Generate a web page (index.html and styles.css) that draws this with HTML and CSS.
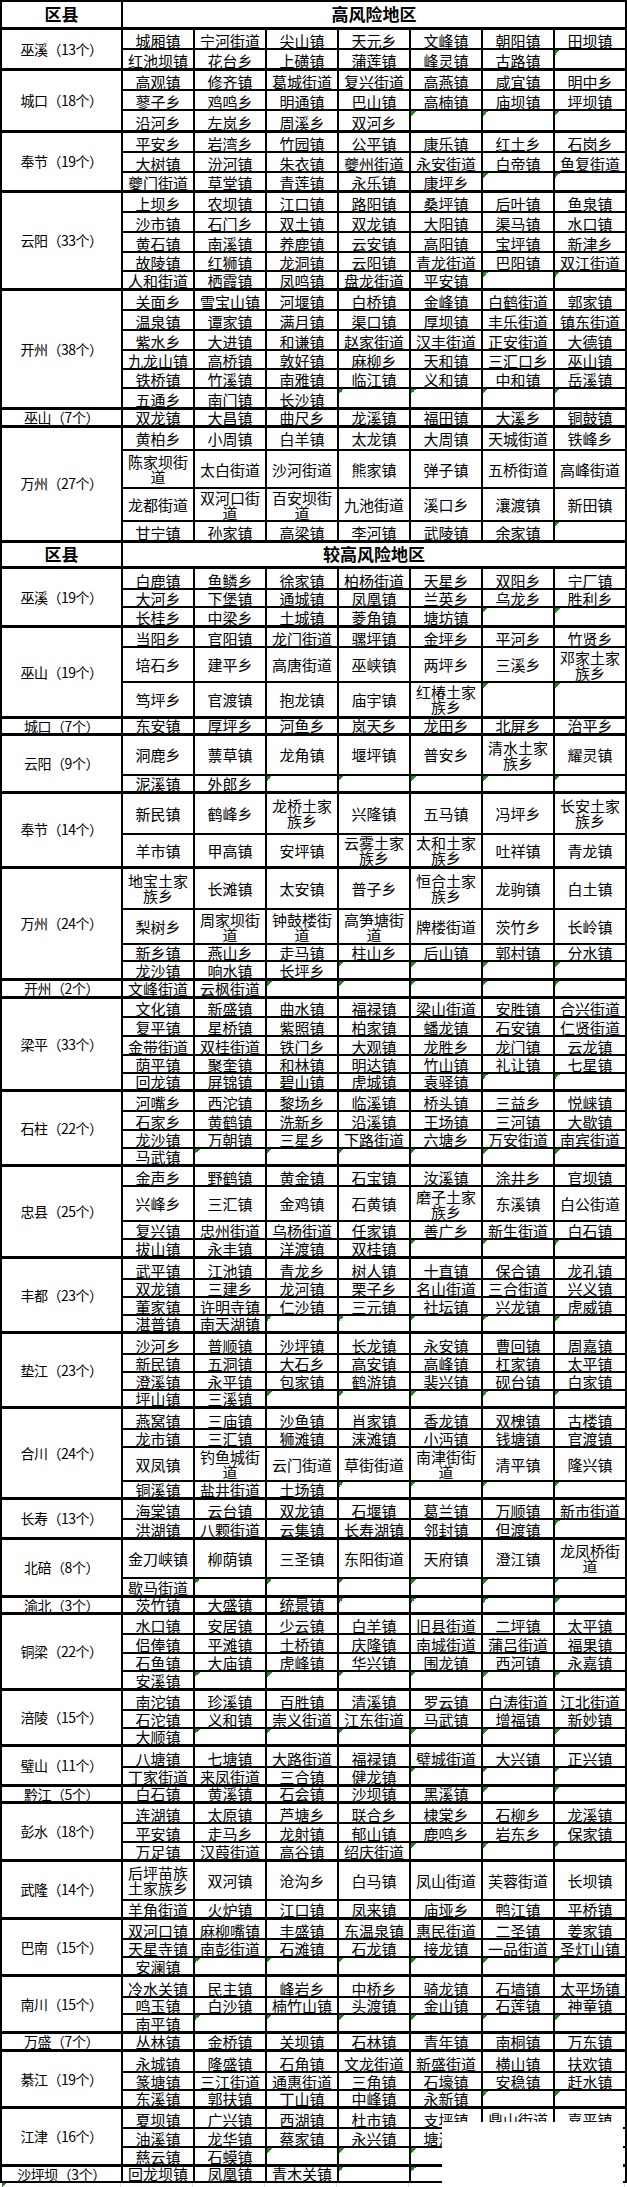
FILE: index.html
```html
<!DOCTYPE html>
<html lang="zh-CN">
<head>
<meta charset="utf-8">
<title>重庆 风险地区</title>
<link rel="stylesheet" href="styles.css">
</head>
<body>
<table class="sheet">
<colgroup><col class="c0"><col class="cd"><col class="cd"><col class="cd"><col class="cd"><col class="cd"><col class="cd"><col class="cd"></colgroup>
<thead>
<tr class="r27"><th>区县</th><th colspan="7">高风险地区</th></tr>
</thead>
<tbody class="sec">
<tr class="r21"><td class="lbl" rowspan="2">巫溪（13个）</td><td>城厢镇</td><td>宁河街道</td><td>尖山镇</td><td>天元乡</td><td>文峰镇</td><td>朝阳镇</td><td>田坝镇</td></tr>
<tr class="r20"><td>红池坝镇</td><td>花台乡</td><td>上磺镇</td><td>蒲莲镇</td><td>峰灵镇</td><td>古路镇</td><td class="e"></td></tr>
</tbody>
<tbody class="sec">
<tr class="r21"><td class="lbl" rowspan="3">城口（18个）</td><td>高观镇</td><td>修齐镇</td><td>葛城街道</td><td>复兴街道</td><td>高燕镇</td><td>咸宜镇</td><td>明中乡</td></tr>
<tr class="r20"><td>蓼子乡</td><td>鸡鸣乡</td><td>明通镇</td><td>巴山镇</td><td>高楠镇</td><td>庙坝镇</td><td>坪坝镇</td></tr>
<tr class="r21"><td>沿河乡</td><td>左岚乡</td><td>周溪乡</td><td>双河乡</td><td class="e"></td><td class="e"></td><td class="e"></td></tr>
</tbody>
<tbody class="sec">
<tr class="r21"><td class="lbl" rowspan="3">奉节（19个）</td><td>平安乡</td><td>岩湾乡</td><td>竹园镇</td><td>公平镇</td><td>康乐镇</td><td>红土乡</td><td>石岗乡</td></tr>
<tr class="r20"><td>大树镇</td><td>汾河镇</td><td>朱衣镇</td><td>夔州街道</td><td>永安街道</td><td>白帝镇</td><td>鱼复街道</td></tr>
<tr class="r19"><td>夔门街道</td><td>草堂镇</td><td>青莲镇</td><td>永乐镇</td><td>康坪乡</td><td class="e"></td><td class="e"></td></tr>
</tbody>
<tbody class="sec">
<tr class="r21"><td class="lbl" rowspan="5">云阳（33个）</td><td>上坝乡</td><td>农坝镇</td><td>江口镇</td><td>路阳镇</td><td>桑坪镇</td><td>后叶镇</td><td>鱼泉镇</td></tr>
<tr class="r20"><td>沙市镇</td><td>石门乡</td><td>双土镇</td><td>双龙镇</td><td>大阳镇</td><td>渠马镇</td><td>水口镇</td></tr>
<tr class="r20"><td>黄石镇</td><td>南溪镇</td><td>养鹿镇</td><td>云安镇</td><td>高阳镇</td><td>宝坪镇</td><td>新津乡</td></tr>
<tr class="r19"><td>故陵镇</td><td>红狮镇</td><td>龙洞镇</td><td>云阳镇</td><td>青龙街道</td><td>巴阳镇</td><td>双江街道</td></tr>
<tr class="r18"><td>人和街道</td><td>栖霞镇</td><td>凤鸣镇</td><td>盘龙街道</td><td>平安镇</td><td class="e"></td><td class="e"></td></tr>
</tbody>
<tbody class="sec">
<tr class="r21"><td class="lbl" rowspan="6">开州（38个）</td><td>关面乡</td><td>雪宝山镇</td><td>河堰镇</td><td>白桥镇</td><td>金峰镇</td><td>白鹤街道</td><td>郭家镇</td></tr>
<tr class="r20"><td>温泉镇</td><td>谭家镇</td><td>满月镇</td><td>渠口镇</td><td>厚坝镇</td><td>丰乐街道</td><td>镇东街道</td></tr>
<tr class="r20"><td>紫水乡</td><td>大进镇</td><td>和谦镇</td><td>赵家街道</td><td>汉丰街道</td><td>正安街道</td><td>大德镇</td></tr>
<tr class="r19"><td>九龙山镇</td><td>高桥镇</td><td>敦好镇</td><td>麻柳乡</td><td>天和镇</td><td>三汇口乡</td><td>巫山镇</td></tr>
<tr class="r19"><td>铁桥镇</td><td>竹溪镇</td><td>南雅镇</td><td>临江镇</td><td>义和镇</td><td>中和镇</td><td>岳溪镇</td></tr>
<tr class="r20"><td>五通乡</td><td>南门镇</td><td>长沙镇</td><td class="e"></td><td class="e"></td><td class="e"></td><td class="e"></td></tr>
</tbody>
<tbody class="sec">
<tr class="r18"><td class="lbl">巫山（7个）</td><td>双龙镇</td><td>大昌镇</td><td>曲尺乡</td><td>龙溪镇</td><td>福田镇</td><td>大溪乡</td><td>铜鼓镇</td></tr>
</tbody>
<tbody class="sec">
<tr class="r24 t"><td class="lbl" rowspan="4">万州（27个）</td><td>黄柏乡</td><td>小周镇</td><td>白羊镇</td><td>太龙镇</td><td>大周镇</td><td>天城街道</td><td>铁峰乡</td></tr>
<tr class="r38 t"><td>陈家坝街道</td><td>太白街道</td><td>沙河街道</td><td>熊家镇</td><td>弹子镇</td><td>五桥街道</td><td>高峰街道</td></tr>
<tr class="r33 t"><td>龙都街道</td><td>双河口街道</td><td>百安坝街道</td><td>九池街道</td><td>溪口乡</td><td>瀼渡镇</td><td>新田镇</td></tr>
<tr class="r20"><td>甘宁镇</td><td>孙家镇</td><td>高梁镇</td><td>李河镇</td><td>武陵镇</td><td>余家镇</td><td class="e"></td></tr>
</tbody>
<tbody class="sec">
<tr class="r26"><th>区县</th><th colspan="7">较高风险地区</th></tr>
</tbody>
<tbody class="sec">
<tr class="r22"><td class="lbl" rowspan="3">巫溪（19个）</td><td>白鹿镇</td><td>鱼鳞乡</td><td>徐家镇</td><td>柏杨街道</td><td>天星乡</td><td>双阳乡</td><td>宁厂镇</td></tr>
<tr class="r18"><td>大河乡</td><td>下堡镇</td><td>通城镇</td><td>凤凰镇</td><td>兰英乡</td><td>乌龙乡</td><td>胜利乡</td></tr>
<tr class="r19"><td>长桂乡</td><td>中梁乡</td><td>土城镇</td><td>菱角镇</td><td>塘坊镇</td><td class="e"></td><td class="e"></td></tr>
</tbody>
<tbody class="sec">
<tr class="r21"><td class="lbl" rowspan="3">巫山（19个）</td><td>当阳乡</td><td>官阳镇</td><td>龙门街道</td><td>骡坪镇</td><td>金坪乡</td><td>平河乡</td><td>竹贤乡</td></tr>
<tr class="r35 t"><td>培石乡</td><td>建平乡</td><td>高唐街道</td><td>巫峡镇</td><td>两坪乡</td><td>三溪乡</td><td>邓家土家族乡</td></tr>
<tr class="r35 t"><td>笃坪乡</td><td>官渡镇</td><td>抱龙镇</td><td>庙宇镇</td><td>红椿土家族乡</td><td class="e"></td><td class="e"></td></tr>
</tbody>
<tbody class="sec">
<tr class="r17"><td class="lbl">城口（7个）</td><td>东安镇</td><td>厚坪乡</td><td>河鱼乡</td><td>岚天乡</td><td>龙田乡</td><td>北屏乡</td><td>治平乡</td></tr>
</tbody>
<tbody class="sec">
<tr class="r41 t"><td class="lbl" rowspan="2">云阳（9个）</td><td>洞鹿乡</td><td>蔈草镇</td><td>龙角镇</td><td>堰坪镇</td><td>普安乡</td><td>清水土家族乡</td><td>耀灵镇</td></tr>
<tr class="r17"><td>泥溪镇</td><td>外郎乡</td><td class="e"></td><td class="e"></td><td class="e"></td><td class="e"></td><td class="e"></td></tr>
</tbody>
<tbody class="sec">
<tr class="r42 t"><td class="lbl" rowspan="2">奉节（14个）</td><td>新民镇</td><td>鹤峰乡</td><td>龙桥土家族乡</td><td>兴隆镇</td><td>五马镇</td><td>冯坪乡</td><td>长安土家族乡</td></tr>
<tr class="r33 t"><td>羊市镇</td><td>甲高镇</td><td>安坪镇</td><td>云雾土家族乡</td><td>太和土家族乡</td><td>吐祥镇</td><td>青龙镇</td></tr>
</tbody>
<tbody class="sec">
<tr class="r42 t"><td class="lbl" rowspan="4">万州（24个）</td><td>地宝土家族乡</td><td>长滩镇</td><td>太安镇</td><td>普子乡</td><td>恒合土家族乡</td><td>龙驹镇</td><td>白土镇</td></tr>
<tr class="r35 t"><td>梨树乡</td><td>周家坝街道</td><td>钟鼓楼街道</td><td>高笋塘街道</td><td>牌楼街道</td><td>茨竹乡</td><td>长岭镇</td></tr>
<tr class="r17"><td>新乡镇</td><td>燕山乡</td><td>走马镇</td><td>柱山乡</td><td>后山镇</td><td>郭村镇</td><td>分水镇</td></tr>
<tr class="r18"><td>龙沙镇</td><td>响水镇</td><td>长坪乡</td><td class="e"></td><td class="e"></td><td class="e"></td><td class="e"></td></tr>
</tbody>
<tbody class="sec">
<tr class="r18"><td class="lbl">开州（2个）</td><td>文峰街道</td><td>云枫街道</td><td class="e"></td><td class="e"></td><td class="e"></td><td class="e"></td><td class="e"></td></tr>
</tbody>
<tbody class="sec">
<tr class="r20"><td class="lbl" rowspan="5">梁平（33个）</td><td>文化镇</td><td>新盛镇</td><td>曲水镇</td><td>福禄镇</td><td>梁山街道</td><td>安胜镇</td><td>合兴街道</td></tr>
<tr class="r19"><td>复平镇</td><td>星桥镇</td><td>紫照镇</td><td>柏家镇</td><td>蟠龙镇</td><td>石安镇</td><td>仁贤街道</td></tr>
<tr class="r19"><td>金带街道</td><td>双桂街道</td><td>铁门乡</td><td>大观镇</td><td>龙胜乡</td><td>龙门镇</td><td>云龙镇</td></tr>
<tr class="r18"><td>荫平镇</td><td>聚奎镇</td><td>和林镇</td><td>明达镇</td><td>竹山镇</td><td>礼让镇</td><td>七星镇</td></tr>
<tr class="r17"><td>回龙镇</td><td>屏锦镇</td><td>碧山镇</td><td>虎城镇</td><td>袁驿镇</td><td class="e"></td><td class="e"></td></tr>
</tbody>
<tbody class="sec">
<tr class="r21"><td class="lbl" rowspan="4">石柱（22个）</td><td>河嘴乡</td><td>西沱镇</td><td>黎场乡</td><td>临溪镇</td><td>桥头镇</td><td>三益乡</td><td>悦崃镇</td></tr>
<tr class="r19"><td>石家乡</td><td>黄鹤镇</td><td>洗新乡</td><td>沿溪镇</td><td>王场镇</td><td>三河镇</td><td>大歇镇</td></tr>
<tr class="r18"><td>龙沙镇</td><td>万朝镇</td><td>三星乡</td><td>下路街道</td><td>六塘乡</td><td>万安街道</td><td>南宾街道</td></tr>
<tr class="r17"><td>马武镇</td><td class="e"></td><td class="e"></td><td class="e"></td><td class="e"></td><td class="e"></td><td class="e"></td></tr>
</tbody>
<tbody class="sec">
<tr class="r21"><td class="lbl" rowspan="4">忠县（25个）</td><td>金声乡</td><td>野鹤镇</td><td>黄金镇</td><td>石宝镇</td><td>汝溪镇</td><td>涂井乡</td><td>官坝镇</td></tr>
<tr class="r35 t"><td>兴峰乡</td><td>三汇镇</td><td>金鸡镇</td><td>石黄镇</td><td>磨子土家族乡</td><td>东溪镇</td><td>白公街道</td></tr>
<tr class="r18"><td>复兴镇</td><td>忠州街道</td><td>乌杨街道</td><td>任家镇</td><td>善广乡</td><td>新生街道</td><td>白石镇</td></tr>
<tr class="r18"><td>拔山镇</td><td>永丰镇</td><td>洋渡镇</td><td>双桂镇</td><td class="e"></td><td class="e"></td><td class="e"></td></tr>
</tbody>
<tbody class="sec">
<tr class="r22"><td class="lbl" rowspan="4">丰都（23个）</td><td>武平镇</td><td>江池镇</td><td>青龙乡</td><td>树人镇</td><td>十直镇</td><td>保合镇</td><td>龙孔镇</td></tr>
<tr class="r18"><td>双龙镇</td><td>三建乡</td><td>龙河镇</td><td>栗子乡</td><td>名山街道</td><td>三合街道</td><td>兴义镇</td></tr>
<tr class="r18"><td>董家镇</td><td>许明寺镇</td><td>仁沙镇</td><td>三元镇</td><td>社坛镇</td><td>兴龙镇</td><td>虎威镇</td></tr>
<tr class="r17"><td>湛普镇</td><td>南天湖镇</td><td class="e"></td><td class="e"></td><td class="e"></td><td class="e"></td><td class="e"></td></tr>
</tbody>
<tbody class="sec">
<tr class="r22"><td class="lbl" rowspan="4">垫江（23个）</td><td>沙河乡</td><td>普顺镇</td><td>沙坪镇</td><td>长龙镇</td><td>永安镇</td><td>曹回镇</td><td>周嘉镇</td></tr>
<tr class="r18"><td>新民镇</td><td>五洞镇</td><td>大石乡</td><td>高安镇</td><td>高峰镇</td><td>杠家镇</td><td>太平镇</td></tr>
<tr class="r18"><td>澄溪镇</td><td>永平镇</td><td>包家镇</td><td>鹤游镇</td><td>裴兴镇</td><td>砚台镇</td><td>白家镇</td></tr>
<tr class="r17"><td>坪山镇</td><td>三溪镇</td><td class="e"></td><td class="e"></td><td class="e"></td><td class="e"></td><td class="e"></td></tr>
</tbody>
<tbody class="sec">
<tr class="r22"><td class="lbl" rowspan="4">合川（24个）</td><td>燕窝镇</td><td>三庙镇</td><td>沙鱼镇</td><td>肖家镇</td><td>香龙镇</td><td>双槐镇</td><td>古楼镇</td></tr>
<tr class="r18"><td>龙市镇</td><td>三汇镇</td><td>狮滩镇</td><td>涞滩镇</td><td>小沔镇</td><td>钱塘镇</td><td>官渡镇</td></tr>
<tr class="r34 t"><td>双凤镇</td><td>钓鱼城街道</td><td>云门街道</td><td>草街街道</td><td>南津街街道</td><td>清平镇</td><td>隆兴镇</td></tr>
<tr class="r17"><td>铜溪镇</td><td>盐井街道</td><td>土场镇</td><td class="e"></td><td class="e"></td><td class="e"></td><td class="e"></td></tr>
</tbody>
<tbody class="sec">
<tr class="r21"><td class="lbl" rowspan="2">长寿（13个）</td><td>海棠镇</td><td>云台镇</td><td>双龙镇</td><td>石堰镇</td><td>葛兰镇</td><td>万顺镇</td><td>新市街道</td></tr>
<tr class="r19"><td>洪湖镇</td><td>八颗街道</td><td>云集镇</td><td>长寿湖镇</td><td>邻封镇</td><td>但渡镇</td><td class="e"></td></tr>
</tbody>
<tbody class="sec">
<tr class="r40 t"><td class="lbl" rowspan="2">北碚（8个）</td><td>金刀峡镇</td><td>柳荫镇</td><td>三圣镇</td><td>东阳街道</td><td>天府镇</td><td>澄江镇</td><td>龙凤桥街道</td></tr>
<tr class="r18"><td>歇马街道</td><td class="e"></td><td class="e"></td><td class="e"></td><td class="e"></td><td class="e"></td><td class="e"></td></tr>
</tbody>
<tbody class="sec">
<tr class="r17"><td class="lbl">渝北（3个）</td><td>茨竹镇</td><td>大盛镇</td><td>统景镇</td><td class="e"></td><td class="e"></td><td class="e"></td><td class="e"></td></tr>
</tbody>
<tbody class="sec">
<tr class="r21"><td class="lbl" rowspan="4">铜梁（22个）</td><td>水口镇</td><td>安居镇</td><td>少云镇</td><td>白羊镇</td><td>旧县街道</td><td>二坪镇</td><td>太平镇</td></tr>
<tr class="r19"><td>侣俸镇</td><td>平滩镇</td><td>土桥镇</td><td>庆隆镇</td><td>南城街道</td><td>蒲吕街道</td><td>福果镇</td></tr>
<tr class="r18"><td>石鱼镇</td><td>大庙镇</td><td>虎峰镇</td><td>华兴镇</td><td>围龙镇</td><td>西河镇</td><td>永嘉镇</td></tr>
<tr class="r18"><td>安溪镇</td><td class="e"></td><td class="e"></td><td class="e"></td><td class="e"></td><td class="e"></td><td class="e"></td></tr>
</tbody>
<tbody class="sec">
<tr class="r21"><td class="lbl" rowspan="3">涪陵（15个）</td><td>南沱镇</td><td>珍溪镇</td><td>百胜镇</td><td>清溪镇</td><td>罗云镇</td><td>白涛街道</td><td>江北街道</td></tr>
<tr class="r18"><td>石沱镇</td><td>义和镇</td><td>崇义街道</td><td>江东街道</td><td>马武镇</td><td>增福镇</td><td>新妙镇</td></tr>
<tr class="r17"><td>大顺镇</td><td class="e"></td><td class="e"></td><td class="e"></td><td class="e"></td><td class="e"></td><td class="e"></td></tr>
</tbody>
<tbody class="sec">
<tr class="r22"><td class="lbl" rowspan="2">璧山（11个）</td><td>八塘镇</td><td>七塘镇</td><td>大路街道</td><td>福禄镇</td><td>璧城街道</td><td>大兴镇</td><td>正兴镇</td></tr>
<tr class="r18"><td>丁家街道</td><td>来凤街道</td><td>三合镇</td><td>健龙镇</td><td class="e"></td><td class="e"></td><td class="e"></td></tr>
</tbody>
<tbody class="sec">
<tr class="r17"><td class="lbl">黔江（5个）</td><td>白石镇</td><td>黄溪镇</td><td>石会镇</td><td>沙坝镇</td><td>黑溪镇</td><td class="e"></td><td class="e"></td></tr>
</tbody>
<tbody class="sec">
<tr class="r21"><td class="lbl" rowspan="3">彭水（18个）</td><td>连湖镇</td><td>太原镇</td><td>芦塘乡</td><td>联合乡</td><td>棣棠乡</td><td>石柳乡</td><td>龙溪镇</td></tr>
<tr class="r19"><td>平安镇</td><td>走马乡</td><td>龙射镇</td><td>郁山镇</td><td>鹿鸣乡</td><td>岩东乡</td><td>保家镇</td></tr>
<tr class="r18"><td>万足镇</td><td>汉葭街道</td><td>高谷镇</td><td>绍庆街道</td><td class="e"></td><td class="e"></td><td class="e"></td></tr>
</tbody>
<tbody class="sec">
<tr class="r40 t"><td class="lbl" rowspan="2">武隆（14个）</td><td>后坪苗族土家族乡</td><td>双河镇</td><td>沧沟乡</td><td>白马镇</td><td>凤山街道</td><td>芙蓉街道</td><td>长坝镇</td></tr>
<tr class="r18"><td>羊角街道</td><td>火炉镇</td><td>江口镇</td><td>凤来镇</td><td>庙垭乡</td><td>鸭江镇</td><td>平桥镇</td></tr>
</tbody>
<tbody class="sec">
<tr class="r21"><td class="lbl" rowspan="3">巴南（15个）</td><td>双河口镇</td><td>麻柳嘴镇</td><td>丰盛镇</td><td>东温泉镇</td><td>惠民街道</td><td>二圣镇</td><td>姜家镇</td></tr>
<tr class="r18"><td>天星寺镇</td><td>南彭街道</td><td>石滩镇</td><td>石龙镇</td><td>接龙镇</td><td>一品街道</td><td>圣灯山镇</td></tr>
<tr class="r18"><td>安澜镇</td><td class="e"></td><td class="e"></td><td class="e"></td><td class="e"></td><td class="e"></td><td class="e"></td></tr>
</tbody>
<tbody class="sec">
<tr class="r22"><td class="lbl" rowspan="3">南川（15个）</td><td>冷水关镇</td><td>民主镇</td><td>峰岩乡</td><td>中桥乡</td><td>骑龙镇</td><td>石墙镇</td><td>太平场镇</td></tr>
<tr class="r17"><td>鸣玉镇</td><td>白沙镇</td><td>楠竹山镇</td><td>头渡镇</td><td>金山镇</td><td>石莲镇</td><td>神童镇</td></tr>
<tr class="r18"><td>南平镇</td><td class="e"></td><td class="e"></td><td class="e"></td><td class="e"></td><td class="e"></td><td class="e"></td></tr>
</tbody>
<tbody class="sec">
<tr class="r18"><td class="lbl">万盛（7个）</td><td>丛林镇</td><td>金桥镇</td><td>关坝镇</td><td>石林镇</td><td>青年镇</td><td>南桐镇</td><td>万东镇</td></tr>
</tbody>
<tbody class="sec">
<tr class="r22"><td class="lbl" rowspan="3">綦江（19个）</td><td>永城镇</td><td>隆盛镇</td><td>石角镇</td><td>文龙街道</td><td>新盛街道</td><td>横山镇</td><td>扶欢镇</td></tr>
<tr class="r18"><td>篆塘镇</td><td>三江街道</td><td>通惠街道</td><td>三角镇</td><td>石壕镇</td><td>安稳镇</td><td>赶水镇</td></tr>
<tr class="r17"><td>东溪镇</td><td>郭扶镇</td><td>丁山镇</td><td>中峰镇</td><td>永新镇</td><td class="e"></td><td class="e"></td></tr>
</tbody>
<tbody class="sec">
<tr class="r21"><td class="lbl" rowspan="3">江津（16个）</td><td>夏坝镇</td><td>广兴镇</td><td>西湖镇</td><td>杜市镇</td><td>支坪镇</td><td>鼎山街道</td><td>嘉平镇</td></tr>
<tr class="r19"><td>油溪镇</td><td>龙华镇</td><td>蔡家镇</td><td>永兴镇</td><td>塘河镇</td><td>白沙镇</td><td>吴滩镇</td></tr>
<tr class="r18"><td>慈云镇</td><td>石蟆镇</td><td class="e"></td><td class="e"></td><td class="e"></td><td class="e"></td><td class="e"></td></tr>
</tbody>
<tbody class="sec">
<tr class="r17"><td class="lbl">沙坪坝（3个）</td><td>回龙坝镇</td><td>凤凰镇</td><td>青木关镇</td><td class="e"></td><td class="e"></td><td class="e"></td><td class="e"></td></tr>
</tbody>
</table>
<div class="tail">
<div class="gc tri"></div><div class="gc"></div><div class="gc"></div><div class="gc"></div><div class="gc"></div><div class="gc"></div><div class="gc"></div><div class="gc"></div>
</div>
<div class="cover"></div>
</body>
</html>
```
FILE: styles.css
```css
html, body {
  margin: 0;
  padding: 0;
  background: #fff;
}

body {
  position: relative;
  font-family: "Noto Sans CJK SC", "Noto Sans", sans-serif;
  color: #000;
}

.sheet {
  border-collapse: collapse;
  table-layout: fixed;
  width: 626px;
}

.c0 { width: 121px; }
.cd { width: 72px; }

.sheet td,
.sheet th {
  border: 2px solid #000;
  padding: 0 1px;
  text-align: center;
  vertical-align: bottom;
  font-size: 15px;
  line-height: 14px;
  font-weight: 400;
  background: #fff;
}

.sheet .sec > tr:first-child > td,
.sheet .sec > tr:first-child > th {
  border-top-width: 3px;
}

.sheet th {
  font-weight: 700;
  font-size: 17px;
  line-height: 18px;
  vertical-align: middle;
}

.sheet td.lbl {
  font-size: 14px;
  letter-spacing: -0.5px;
  vertical-align: middle;
}

.sheet tr.t > td {
  vertical-align: middle;
  line-height: 15px;
}

.sheet td.e {
  background: linear-gradient(135deg, #119411 50%, transparent 50%) left top / 5px 5px no-repeat #fff;
}

tr.r17 { height: 17px; }
tr.r18 { height: 18px; }
tr.r19 { height: 19px; }
tr.r20 { height: 20px; }
tr.r21 { height: 21px; }
tr.r22 { height: 22px; }
tr.r24 { height: 24px; }
tr.r26 { height: 26px; }
tr.r27 { height: 27px; }
tr.r33 { height: 33px; }
tr.r34 { height: 34px; }
tr.r35 { height: 35px; }
tr.r38 { height: 38px; }
tr.r40 { height: 40px; }
tr.r41 { height: 41px; }
tr.r42 { height: 42px; }

.tail {
  display: grid;
  grid-template-columns: 121px repeat(7, 72px);
  height: 6px;
}

.gc {
  border-right: 1px solid #dadada;
}

.gc.tri {
  background: linear-gradient(135deg, #119411 50%, transparent 50%) 2px 0 / 5px 5px no-repeat;
}

.cover {
  position: absolute;
  left: 442px;
  top: 2122px;
  width: 181px;
  height: 70px;
  background: #fff;
}
```
